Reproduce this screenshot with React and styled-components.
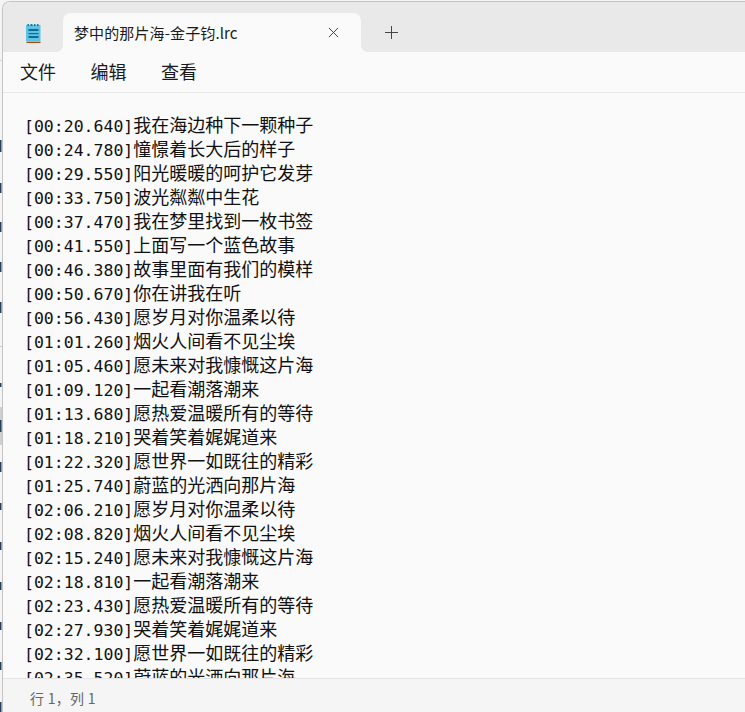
import styled, { createGlobalStyle } from 'styled-components';

const lines = [
  ['00:20.640', '我在海边种下一颗种子'],
  ['00:24.780', '憧憬着长大后的样子'],
  ['00:29.550', '阳光暖暖的呵护它发芽'],
  ['00:33.750', '波光粼粼中生花'],
  ['00:37.470', '我在梦里找到一枚书签'],
  ['00:41.550', '上面写一个蓝色故事'],
  ['00:46.380', '故事里面有我们的模样'],
  ['00:50.670', '你在讲我在听'],
  ['00:56.430', '愿岁月对你温柔以待'],
  ['01:01.260', '烟火人间看不见尘埃'],
  ['01:05.460', '愿未来对我慷慨这片海'],
  ['01:09.120', '一起看潮落潮来'],
  ['01:13.680', '愿热爱温暖所有的等待'],
  ['01:18.210', '哭着笑着娓娓道来'],
  ['01:22.320', '愿世界一如既往的精彩'],
  ['01:25.740', '蔚蓝的光洒向那片海'],
  ['02:06.210', '愿岁月对你温柔以待'],
  ['02:08.820', '烟火人间看不见尘埃'],
  ['02:15.240', '愿未来对我慷慨这片海'],
  ['02:18.810', '一起看潮落潮来'],
  ['02:23.430', '愿热爱温暖所有的等待'],
  ['02:27.930', '哭着笑着娓娓道来'],
  ['02:32.100', '愿世界一如既往的精彩'],
  ['02:35.520', '蔚蓝的光洒向那片海'],
];

// slivers of the window behind that stick out on the left edge
const slivers = [
  [140, 12], [183, 10], [222, 10], [262, 10], [302, 11], [383, 4], [420, 12],
  [462, 10], [503, 7], [542, 8], [582, 8], [622, 8], [662, 8], [702, 10],
];

const App = () => (
  <>
    <GlobalStyle />
    <Desktop>
      <BehindStrip viewBox="0 0 2 712">
        <rect x="0" y="60" width="2" height="1" fill="#d8d8d8" />
        <rect x="0" y="346" width="2" height="1" fill="#d0d0d0" />
        <rect x="0" y="407" width="2" height="38" fill="#cfcfcf" />
        {slivers.map(([y, h]) => (
          <rect key={y} x="0" y={y} width="1.5" height={h} fill="#26405e" />
        ))}
      </BehindStrip>
      <Window>
        <TabBar>
          <AppIcon viewBox="0 0 16 20">
            <rect x="1" y="2" width="14.5" height="16" fill="#5cc3e6" />
            <rect x="1" y="18" width="14.5" height="1" fill="#e8e8e8" />
            <rect x="1.5" y="18.6" width="14" height="1.4" fill="#a84b0c" />
            <rect x="2.5" y="1" width="1.5" height="2" fill="#0b7f9e" />
            <rect x="5.5" y="1" width="2" height="2" fill="#0b7f9e" />
            <rect x="9" y="1" width="1.5" height="2" fill="#0b7f9e" />
            <rect x="12" y="1" width="1.5" height="2" fill="#0b7f9e" />
            <rect x="3.5" y="6" width="10" height="2" fill="#0f6d90" />
            <rect x="3.5" y="10" width="10" height="1.2" fill="#0f6d90" />
            <rect x="3.5" y="13" width="10" height="2" fill="#0f6d90" />
          </AppIcon>
          <Tab>
            <TabTitle>梦中的那片海-金子钧.lrc</TabTitle>
            <CloseIcon viewBox="0 0 12 12">
              <path d="M1 1l10 10M11 1L1 11" />
            </CloseIcon>
          </Tab>
          <PlusIcon viewBox="0 0 13 13">
            <path d="M6.5 0v13M0 6.5h13" />
          </PlusIcon>
        </TabBar>
        <MenuBar>
          <MenuItem>文件</MenuItem>
          <MenuItem>编辑</MenuItem>
          <MenuItem>查看</MenuItem>
        </MenuBar>
        <Editor>
          {lines.map(([time, text]) => (
            <Line key={time}>
              <Stamp>[{time}]</Stamp>
              {text}
            </Line>
          ))}
        </Editor>
        <StatusBar>行 1，列 1</StatusBar>
      </Window>
    </Desktop>
  </>
);

const GlobalStyle = createGlobalStyle`
  html, body {
    margin: 0;
    padding: 0;
    width: 745px;
    height: 712px;
    overflow: hidden;
    background: #f3f3f3;
  }
`;

const Desktop = styled.div`
  display: flex;
  width: 745px;
  height: 712px;
  padding-top: 1px;
  box-sizing: border-box;
  background: #f4f4f4;
`;

const BehindStrip = styled.svg`
  flex: none;
  width: 2px;
  height: 712px;
  margin-top: -1px;
`;

const Window = styled.div`
  flex: 1;
  display: flex;
  flex-direction: column;
  height: 711px;
  min-width: 0;
  box-sizing: border-box;
  border-top: 1px solid #c4c4c4;
  border-left: 1px solid #c4c4c4;
  border-top-left-radius: 8px;
  background: #fafafa;
  overflow: hidden;
  font-family: "Noto Sans CJK SC", sans-serif;
`;

const TabBar = styled.div`
  display: flex;
  align-items: center;
  flex: none;
  height: 50px;
  padding: 11px 0 0 22px;
  box-sizing: border-box;
  background: #e9e9e9;
`;

const AppIcon = styled.svg`
  width: 16px;
  height: 20px;
  flex: none;
`;

const Tab = styled.div`
  position: relative;
  display: flex;
  align-items: center;
  justify-content: space-between;
  width: 298px;
  height: 39px;
  margin-left: 22px;
  padding: 0 22px 0 11px;
  box-sizing: border-box;
  background: #fafafa;
  border-radius: 8px 8px 0 0;

  &::before,
  &::after {
    content: "";
    position: absolute;
    bottom: 0;
    width: 6px;
    height: 6px;
  }

  &::before {
    left: -6px;
    background: radial-gradient(circle at 0 0, #e9e9e9 5.5px, #fafafa 6px);
  }

  &::after {
    right: -6px;
    background: radial-gradient(circle at 100% 0, #e9e9e9 5.5px, #fafafa 6px);
  }
`;

const TabTitle = styled.span`
  font-size: 15px;
  letter-spacing: 0.12px;
  color: #1b1b1b;
`;

const CloseIcon = styled.svg`
  flex: none;
  width: 11px;
  height: 11px;
  fill: none;
  stroke: #333;
  stroke-width: 1;
`;

const PlusIcon = styled.svg`
  flex: none;
  width: 13px;
  height: 13px;
  margin-left: 24px;
  fill: none;
  stroke: #444;
  stroke-width: 1;
`;

const MenuBar = styled.div`
  display: flex;
  flex: none;
  gap: 34.5px;
  align-items: center;
  height: 41px;
  padding: 0 0 2px 17px;
  box-sizing: border-box;
  border-bottom: 1px solid #e9e9e9;
`;

const MenuItem = styled.span`
  font-size: 18px;
  color: #1a1a1a;
`;

const Editor = styled.div`
  flex: 1;
  min-height: 0;
  padding: 19px 0 0 21px;
  overflow: hidden;
`;

const Line = styled.div`
  height: 24px;
  line-height: 24px;
  font-size: 18px;
  color: #111;
  white-space: nowrap;
`;

const Stamp = styled.span`
  font-family: "DejaVu Sans Mono", monospace;
  font-size: 16.5px;
`;

const StatusBar = styled.div`
  flex: none;
  height: 34px;
  line-height: 38px;
  padding-left: 27px;
  box-sizing: border-box;
  border-top: 1px solid #e5e5e5;
  background: #f5f5f5;
  font-size: 14px;
  letter-spacing: 0.3px;
  color: #666;
  overflow: hidden;
`;

export default App;
